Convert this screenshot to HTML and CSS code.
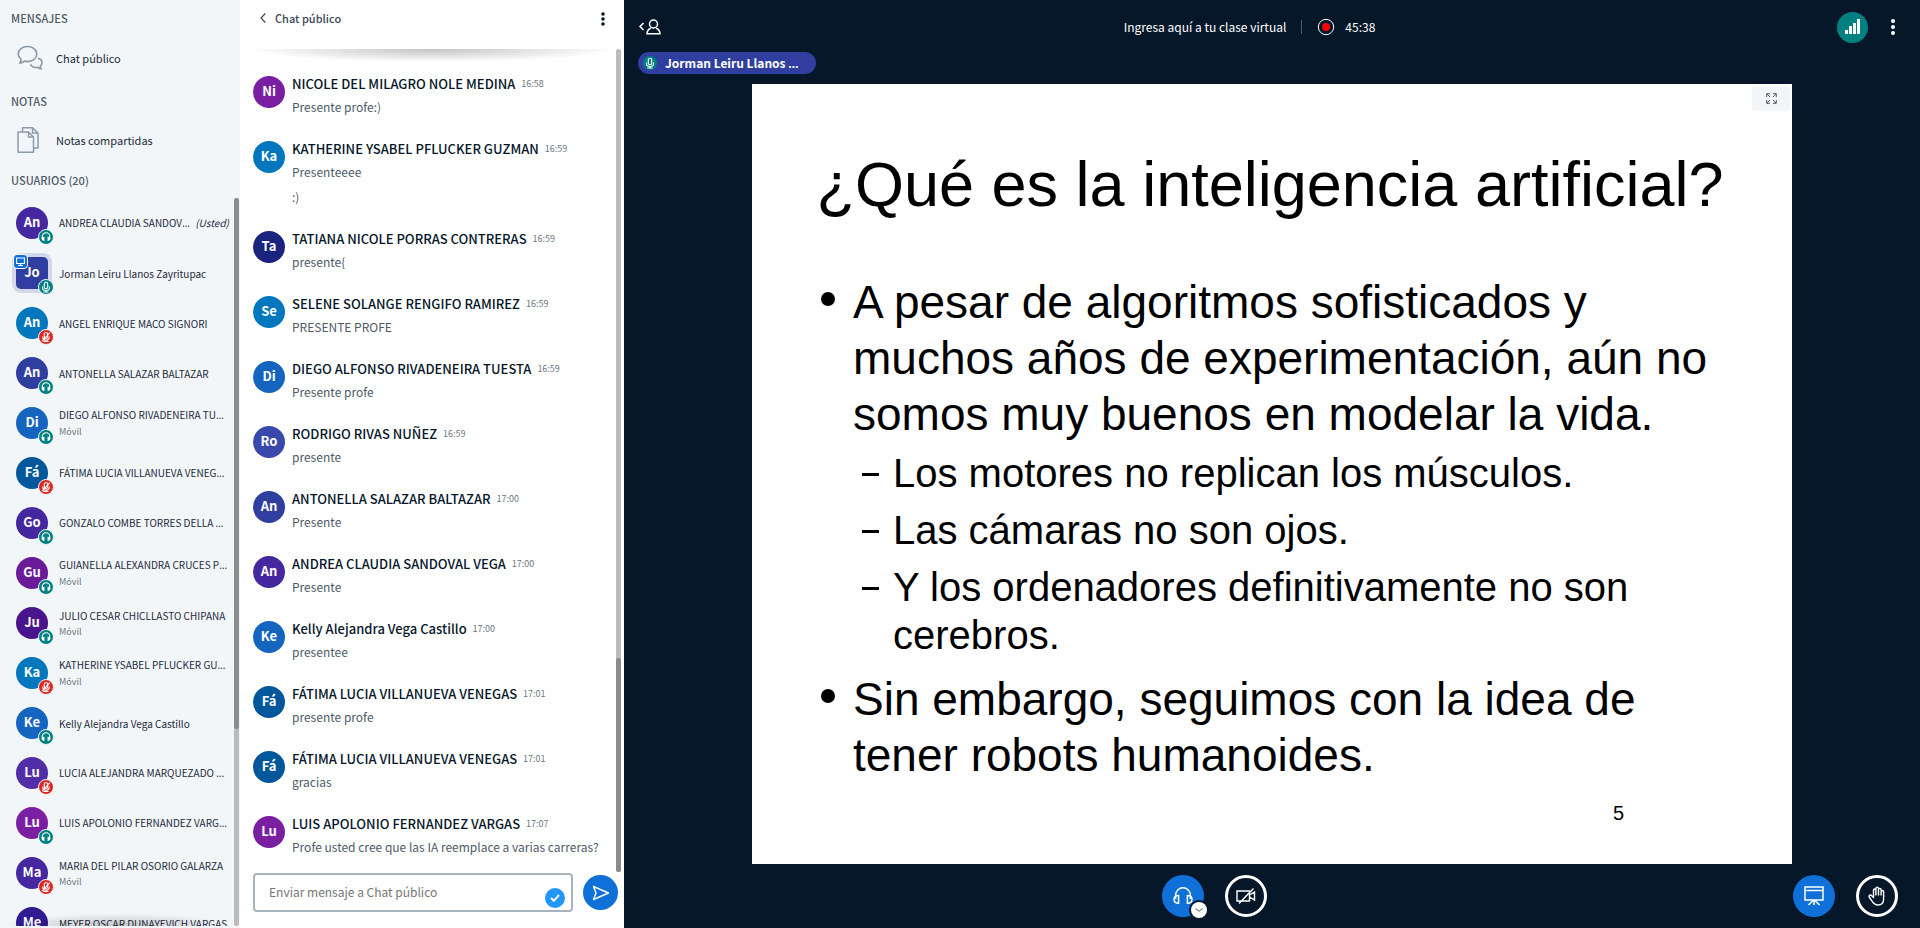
FILE: index.html
```html
<!DOCTYPE html>
<html lang="es">
<head>
<meta charset="utf-8">
<title>Ingresa aquí a tu clase virtual</title>
<link rel="stylesheet" href="styles.css">
</head>
<body>
<svg class="sprite" aria-hidden="true">
  <symbol id="i-headset" viewBox="0 0 20 20"><path d="M2.6 13V9.2a7.4 7.4 0 0 1 14.8 0V13" fill="none" stroke="currentColor" stroke-width="1.5"/><path d="M5.6 9.6v7.6C3 17.400 1 16 1 13.400s2-4 4.600-3.800zM14.400 9.600v7.600c2.600.200 4.600-1.200 4.600-3.800s-2-4-4.600-3.800z" fill="none" stroke="currentColor" stroke-width="1.500"/></symbol>
  <symbol id="i-mini-headset" viewBox="0 0 14 14"><path d="M2.600 9V6.500a4.400 4.400 0 0 1 8.800 0V9" fill="none" stroke="currentColor" stroke-width="1.300"/><path d="M5.200 6.600v5C3.200 11.600 2 10.700 2 9.100s1.200-2.500 3.200-2.500zM8.800 6.600v5c2 0 3.200-.900 3.200-2.500s-1.200-2.500-3.200-2.500z" fill="currentColor"/></symbol>
  <symbol id="i-mic" viewBox="0 0 14 14"><rect x="5" y="1.500" width="4" height="7.500" rx="2" fill="none" stroke="currentColor" stroke-width="1.300"/><path d="M3 6.500v1.700c0 3.900 8 3.900 8 0V6.500M7 11v2M4 12.800h6" fill="none" stroke="currentColor" stroke-width="1.200"/></symbol>
  <symbol id="i-mute" viewBox="0 0 14 14"><rect x="5" y="2" width="4" height="6.500" rx="1.500" fill="none" stroke="currentColor" stroke-width="1.300"/><path d="M3.300 6.500v1.500c0 3.600 7.400 3.600 7.400 0V6.500M7 10.500v2M4 12.300h6M11.500 1.800l-9 10" fill="none" stroke="currentColor" stroke-width="1.200"/></symbol>
</svg>
<div class="app">
  <aside class="sidebar">
    <h2 class="side-title">Mensajes</h2>
    <button class="side-item side-item-first" type="button">
      <svg class="side-icon" viewBox="0 0 26 26" aria-hidden="true"><g fill="none" stroke="currentColor" stroke-width="1.600" stroke-linejoin="round"><path d="M10.500 1.500c5.200 0 9.300 3.300 9.300 7.500s-4.100 7.600-9.300 7.600c-1.200 0-2.200-.200-3.200-.500-1 1-2.500 1.800-4.500 2 .8-1 1.300-2.500 1.200-3.900C2.200 12.800 1.200 11 1.200 9c0-4.200 4.100-7.500 9.300-7.500z"/><path d="M21 13.400c2.400.6 4 2.300 4 4.300 0 1.300-.6 2.500-1.700 3.300 0 1 .3 2 1 2.800-1.500-.1-2.700-.6-3.500-1.400-3.200.5-6.300-.8-7.300-3.100"/></g></svg>
      <span>Chat público</span>
    </button>
    <h2 class="side-title">Notas</h2>
    <button class="side-item" type="button">
      <svg class="side-icon" viewBox="0 0 26 26" aria-hidden="true"><g fill="none" stroke="currentColor" stroke-width="1.500" stroke-linejoin="round"><path d="M1 5h10.500l5 5v15.200H1zM11.500 5v5h5"/><path d="M5.500 5V.8h10L21 6v15h-4.500M15.500.8V6H21"/></g></svg>
      <span>Notas compartidas</span>
    </button>
    <h2 class="side-title side-title-users">Usuarios (20)</h2>
    <div class="user-area">
      <ul class="users">
        <li class="user"><span class="avatar c-violet">An<i class="badge"><svg><use href="#i-mini-headset"/></svg></i></span><span class="user-name">ANDREA CLAUDIA SANDOV<span class="dots">…</span> <em>(Usted)</em></span></li>
        <li class="user"><span class="avatar c-indigo presenter">Jo<i class="screen"><svg viewBox="0 0 14 14"><path d="M2 2.500h10v7H2zM7 9.500v2M4 12h6" fill="none" stroke="currentColor" stroke-width="1.400"/></svg></i><i class="badge"><svg><use href="#i-mic"/></svg></i></span><span class="user-name">Jorman Leiru Llanos Zayritupac</span></li>
        <li class="user"><span class="avatar c-sky">An<i class="badge muted"><svg><use href="#i-mute"/></svg></i></span><span class="user-name">ANGEL ENRIQUE MACO SIGNORI</span></li>
        <li class="user"><span class="avatar c-indigo">An<i class="badge"><svg><use href="#i-mini-headset"/></svg></i></span><span class="user-name">ANTONELLA SALAZAR BALTAZAR</span></li>
        <li class="user"><span class="avatar c-blue">Di<i class="badge"><svg><use href="#i-mini-headset"/></svg></i></span><span class="user-name">DIEGO ALFONSO RIVADENEIRA TU<span class="dots">…</span><small>Móvil</small></span></li>
        <li class="user"><span class="avatar c-navy">Fá<i class="badge muted"><svg><use href="#i-mute"/></svg></i></span><span class="user-name">FÁTIMA LUCIA VILLANUEVA VENEG<span class="dots">…</span></span></li>
        <li class="user"><span class="avatar c-violet">Go<i class="badge"><svg><use href="#i-mini-headset"/></svg></i></span><span class="user-name">GONZALO COMBE TORRES DELLA <span class="dots">…</span></span></li>
        <li class="user"><span class="avatar c-purple">Gu<i class="badge"><svg><use href="#i-mini-headset"/></svg></i></span><span class="user-name">GUIANELLA ALEXANDRA CRUCES P<span class="dots">…</span><small>Móvil</small></span></li>
        <li class="user"><span class="avatar c-plum">Ju<i class="badge"><svg><use href="#i-mini-headset"/></svg></i></span><span class="user-name">JULIO CESAR CHICLLASTO CHIPANA<small>Móvil</small></span></li>
        <li class="user"><span class="avatar c-sky">Ka<i class="badge muted"><svg><use href="#i-mute"/></svg></i></span><span class="user-name">KATHERINE YSABEL PFLUCKER GU<span class="dots">…</span><small>Móvil</small></span></li>
        <li class="user"><span class="avatar c-blue">Ke<i class="badge"><svg><use href="#i-mini-headset"/></svg></i></span><span class="user-name">Kelly Alejandra Vega Castillo</span></li>
        <li class="user"><span class="avatar c-iris">Lu<i class="badge muted"><svg><use href="#i-mute"/></svg></i></span><span class="user-name">LUCIA ALEJANDRA MARQUEZADO <span class="dots">…</span></span></li>
        <li class="user"><span class="avatar c-magenta">Lu<i class="badge"><svg><use href="#i-mini-headset"/></svg></i></span><span class="user-name">LUIS APOLONIO FERNANDEZ VARG<span class="dots">…</span></span></li>
        <li class="user"><span class="avatar c-violet">Ma<i class="badge muted"><svg><use href="#i-mute"/></svg></i></span><span class="user-name">MARIA DEL PILAR OSORIO GALARZA<small>Móvil</small></span></li>
        <li class="user"><span class="avatar c-deep">Me</span><span class="user-name">MEYER OSCAR DUNAYEVICH VARGAS</span></li>
      </ul>
      <div class="scroll"><div class="scroll-thumb users-thumb"></div></div>
    </div>
  </aside>

  <section class="chat">
    <header class="chat-head">
      <button class="chat-back" type="button"><svg width="6" height="10" viewBox="0 0 6 10" aria-hidden="true"><path d="M5.300.500 1 5l4.300 4.500" fill="none" stroke="currentColor" stroke-width="1.200"/></svg>Chat público</button>
      <button class="plain" type="button" aria-label="Opciones del chat"><svg width="4" height="14" viewBox="0 0 4 14"><g fill="currentColor"><circle cx="2" cy="2" r="1.800"/><circle cx="2" cy="7" r="1.800"/><circle cx="2" cy="12" r="1.800"/></g></svg></button>
    </header>
    <div class="chat-area">
      <ol class="messages">
        <li class="msg"><span class="avatar c-magenta">Ni</span><div><h3>NICOLE DEL MILAGRO NOLE MEDINA <time>16:58</time></h3><p>Presente profe:)</p></div></li>
        <li class="msg"><span class="avatar c-sky">Ka</span><div><h3>KATHERINE YSABEL PFLUCKER GUZMAN <time>16:59</time></h3><p>Presenteeee</p><p>:)</p></div></li>
        <li class="msg"><span class="avatar c-ink">Ta</span><div><h3>TATIANA NICOLE PORRAS CONTRERAS <time>16:59</time></h3><p>presente{</p></div></li>
        <li class="msg"><span class="avatar c-sky">Se</span><div><h3>SELENE SOLANGE RENGIFO RAMIREZ <time>16:59</time></h3><p>PRESENTE PROFE</p></div></li>
        <li class="msg"><span class="avatar c-blue">Di</span><div><h3>DIEGO ALFONSO RIVADENEIRA TUESTA <time>16:59</time></h3><p>Presente profe</p></div></li>
        <li class="msg"><span class="avatar c-slate">Ro</span><div><h3>RODRIGO RIVAS NUÑEZ <time>16:59</time></h3><p>presente</p></div></li>
        <li class="msg"><span class="avatar c-indigo">An</span><div><h3>ANTONELLA SALAZAR BALTAZAR <time>17:00</time></h3><p>Presente</p></div></li>
        <li class="msg"><span class="avatar c-violet">An</span><div><h3>ANDREA CLAUDIA SANDOVAL VEGA <time>17:00</time></h3><p>Presente</p></div></li>
        <li class="msg"><span class="avatar c-blue">Ke</span><div><h3>Kelly Alejandra Vega Castillo <time>17:00</time></h3><p>presentee</p></div></li>
        <li class="msg"><span class="avatar c-navy">Fá</span><div><h3>FÁTIMA LUCIA VILLANUEVA VENEGAS <time>17:01</time></h3><p>presente profe</p></div></li>
        <li class="msg"><span class="avatar c-navy">Fá</span><div><h3>FÁTIMA LUCIA VILLANUEVA VENEGAS <time>17:01</time></h3><p>gracias</p></div></li>
        <li class="msg"><span class="avatar c-magenta">Lu</span><div><h3>LUIS APOLONIO FERNANDEZ VARGAS <time>17:07</time></h3><p>Profe usted cree que las IA reemplace a varias carreras?</p></div></li>
      </ol>
      <div class="scroll"><div class="scroll-thumb chat-thumb"></div></div>
    </div>
    <form class="composer">
      <div class="field">
        <input type="text" aria-label="Enviar mensaje a Chat público" placeholder="Enviar mensaje a Chat público">
        <span class="check"><svg width="10" height="8" viewBox="0 0 10 8" aria-hidden="true"><path d="M1 4l2.800 2.800L9 1" fill="none" stroke="currentColor" stroke-width="2"/></svg></span>
      </div>
      <button class="send" type="button" aria-label="Enviar mensaje"><svg width="18" height="16" viewBox="0 0 18 16"><path d="M1.500 1.500 16.500 8l-15 6.500L4 8z" fill="none" stroke="currentColor" stroke-width="1.400" stroke-linejoin="round"/></svg></button>
    </form>
  </section>

  <main class="stage">
    <header class="bar">
      <button class="plain toggle" type="button" aria-label="Ocultar lista de usuarios"><svg width="24" height="18" viewBox="0 0 24 18"><g fill="none" stroke="currentColor" stroke-width="1.500"><path d="M5.500 5 2 8.500 5.500 12"/><circle cx="15.500" cy="6" r="4"/><path d="M9 16c0-3.200 2-5 3.800-5.700M22 16c0-3.200-2-5-3.800-5.700M8.300 15.800h14.400"/></g></svg></button>
      <div class="room">
        <h1>Ingresa aquí a tu clase virtual</h1>
        <span class="divider"></span>
        <span class="record"><svg width="18" height="18" viewBox="0 0 18 18" aria-hidden="true"><circle cx="9" cy="9" r="7.700" fill="none" stroke="#fff"/><circle cx="9" cy="9" r="4" fill="#f00"/></svg>45:38</span>
      </div>
      <button class="signal" type="button" aria-label="Estado de la conexión"><svg width="16" height="16" viewBox="0 0 16 16"><path d="M0 11h3v4H0zM4 7h3v8H4zM8 4h3v11H8zM12 0h3v15h-3z" fill="currentColor"/></svg></button>
      <button class="plain more" type="button" aria-label="Opciones"><svg width="4" height="16" viewBox="0 0 4 16"><g fill="currentColor"><circle cx="2" cy="2" r="2"/><circle cx="2" cy="8" r="2"/><circle cx="2" cy="14" r="2"/></g></svg></button>
    </header>
    <div class="talkers">
      <button class="talker" type="button"><i class="talker-mic"><svg><use href="#i-mic"/></svg></i><span>Jorman Leiru Llanos <span class="dots">…</span></span></button>
    </div>
    <div class="presentation">
      <article class="slide">
        <button class="expand" type="button" aria-label="Pantalla completa"><svg width="11" height="11" viewBox="0 0 11 11"><path d="M.700 4V.700H4M7 .700h3.300V4M10.300 7v3.300H7M4 10.300H.700V7M1 1l3 3M10 1 7 4M10 10 7 7M1 10l3-3" fill="none" stroke="currentColor" stroke-width="1"/></svg></button>
        <h2 class="slide-title">¿Qué es la inteligencia artificial?</h2>
        <ul class="points">
          <li>A pesar de algoritmos sofisticados y<br>muchos años de experimentación, aún no<br>somos muy buenos en modelar la vida.
            <ul class="subpoints">
              <li>Los motores no replican los músculos.</li>
              <li>Las cámaras no son ojos.</li>
              <li>Y los ordenadores definitivamente no son<br>cerebros.</li>
            </ul>
          </li>
          <li>Sin embargo, seguimos con la idea de<br>tener robots humanoides.</li>
        </ul>
        <p class="slide-number">5</p>
      </article>
    </div>
    <footer class="actions">
      <div class="actions-center">
        <div class="audio">
          <button class="round filled" type="button" aria-label="Audio"><svg width="20" height="20"><use href="#i-headset"/></svg></button>
          <button class="audio-menu" type="button" aria-label="Cambiar dispositivo"><svg width="8" height="4" viewBox="0 0 8 4"><path d="M.500.500 4 3.300 7.500.500" fill="none" stroke="currentColor"/></svg></button>
        </div>
        <button class="round" type="button" aria-label="Compartir cámara"><svg width="20" height="18" viewBox="0 0 20 18"><g fill="none" stroke="currentColor" stroke-width="1.400"><path d="M1 4h12.500v10H1zM13.500 8l5-3v8l-5-3M3 16.500 17.500 1.500"/></g></svg></button>
      </div>
      <button class="round filled" type="button" aria-label="Presentación"><svg width="20" height="20" viewBox="0 0 20 20"><g fill="none" stroke="currentColor" stroke-width="1.500"><path d="M1 1h18v13H1zM1 4.500h18M10 14v5M9 14.500 4.500 19M11 14.500l4.500 4.500"/></g></svg></button>
      <button class="round" type="button" aria-label="Levantar la mano"><svg width="18" height="20" viewBox="0 0 18 20"><path d="M5.500 11.500V4.200c0-1.700 2.400-1.700 2.400 0V2.500c0-1.900 2.600-1.900 2.600 0v1.200c0-1.800 2.600-1.800 2.600 0v2c0-1.700 2.500-1.700 2.500 0V13c0 4-2 6-5.600 6-3.500 0-4.700-1.600-6-3.800L1.200 11c-.8-1.700 1.400-2.600 2.500-1.200zM7.900 4.200V9.500M10.500 3.500v6M13.100 5v4.500" fill="none" stroke="currentColor" stroke-width="1.400" stroke-linejoin="round"/></svg></button>
    </footer>
  </main>
</div>
</body>
</html>
```
FILE: styles.css
```css
* { box-sizing: border-box; }

body {
  margin: 0;
  font-family: "Source Sans Pro", "Noto Sans CJK SC", "Noto Sans", sans-serif;
  font-size: 12px;
  color: #4e5a66;
  background: #06172a;
}

h1, h2, h3, p, ul, ol { margin: 0; padding: 0; }
ul, ol { list-style: none; }
i { font-style: normal; }
svg { display: block; }
.sprite { position: absolute; width: 0; height: 0; }

button {
  margin: 0;
  padding: 0;
  border: 0;
  font: inherit;
  color: inherit;
  background: none;
}

.dots { font-family: "Noto Sans", sans-serif; }

.app {
  display: grid;
  grid-template-columns: 240px 384px minmax(0, 1fr);
  height: 100vh;
}

/* Shared avatar */
.avatar {
  position: relative;
  flex: none;
  width: 32px;
  height: 32px;
  border-radius: 50%;
  font-size: 13px;
  font-weight: 700;
  line-height: 30px;
  text-align: center;
  color: #fff;
}
.c-violet { background: #4527a0; }
.c-indigo { background: #303f9f; }
.c-sky { background: #0277bd; }
.c-blue { background: #1565c0; }
.c-navy { background: #01579b; }
.c-purple { background: #6a1b9a; }
.c-plum { background: #4a148c; }
.c-iris { background: #512da8; }
.c-magenta { background: #7b1fa2; }
.c-deep { background: #311b92; }
.c-ink { background: #1a237e; }
.c-slate { background: #3949ab; }

/* Sidebar */
.sidebar {
  display: flex;
  flex-direction: column;
  min-height: 0;
  padding: 8px 0 2px;
  background: #f3f6f9;
}
.side-title {
  margin-top: 9px;
  padding-left: 11px;
  font-size: 11px;
  font-weight: 500;
  line-height: 20px;
  text-transform: uppercase;
}
.side-title:first-child { margin-top: 0; }
.side-title-users { margin: 6px 0 8px; }
.side-item {
  display: flex;
  align-items: center;
  gap: 13px;
  height: 48px;
  margin-top: 5px;
  padding-left: 17px;
  font-size: 11px;
  line-height: 20px;
  color: #1b2a3a;
}
.side-item-first { margin-top: 6px; }
.side-icon { width: 26px; height: 26px; color: #8b9aa8; }

.user-area {
  position: relative;
  flex: 1;
  min-height: 0;
  overflow: hidden;
}
.user-area::after {
  content: "";
  position: absolute;
  left: 0;
  right: 6px;
  bottom: 0;
  height: 13px;
  background: radial-gradient(farthest-side at 50% 100%, rgba(0, 0, 0, .2), rgba(0, 0, 0, 0));
}
.user {
  display: flex;
  align-items: center;
  gap: 11px;
  height: 50px;
  padding-left: 16px;
}
.user-name {
  font-size: 10px;
  line-height: 17px;
  white-space: nowrap;
  color: #1b2a3a;
}
.user-name em { margin-left: 3px; }
.user-name small {
  display: block;
  font-size: 9px;
  line-height: 16px;
  color: #6b7682;
}
.presenter { border-radius: 5px; box-shadow: 0 0 0 4px #d2d7ea; }
.badge {
  position: absolute;
  right: -6px;
  bottom: -6px;
  width: 16px;
  height: 16px;
  padding: 1px;
  border: 1px solid #f3f6f9;
  border-radius: 50%;
  color: #fff;
  background: #008081;
}
.badge svg { width: 12px; height: 12px; }
.muted { background: #df2721; }
.screen {
  position: absolute;
  left: -3px;
  top: -3px;
  padding: 1px;
  border: 1px solid #fff;
  border-radius: 4px;
  color: #fff;
  background: #0f70d7;
}
.screen svg { width: 11px; height: 11px; }

.scroll {
  position: absolute;
  top: 0;
  right: 1px;
  bottom: 0;
  width: 5px;
  border-radius: 3px;
  background: #b9bbbd;
}
.scroll-thumb {
  position: absolute;
  left: 0;
  right: 0;
  border-radius: 3px;
  background: #8a8c8e;
}
.users-thumb { top: 0; height: 73%; }
.chat-thumb { bottom: 0; height: 26%; }

/* Chat */
.chat {
  display: flex;
  flex-direction: column;
  min-height: 0;
  background: #fff;
}
.chat-head {
  display: flex;
  justify-content: space-between;
  align-items: flex-start;
  height: 49px;
  padding: 8px 18px 0 20px;
}
.chat-back {
  display: flex;
  align-items: center;
  gap: 9px;
  font-size: 11px;
  font-weight: 500;
  line-height: 20px;
  color: #3a4754;
}
.chat-head .plain { padding: 4px 1px; color: #06172a; }
.chat-area {
  position: relative;
  flex: 1;
  min-height: 0;
  overflow: hidden;
}
.chat-area::before {
  content: "";
  position: absolute;
  left: 8px;
  right: 8px;
  top: 0;
  height: 13px;
  background: radial-gradient(farthest-side at 50% 0, rgba(0, 0, 0, .24), rgba(0, 0, 0, 0));
}
.chat-area .scroll { right: 3px; }
.messages {
  display: flex;
  flex-direction: column;
  gap: 20px;
  padding: 25px 8px 0 13px;
}
.msg { display: flex; gap: 7px; }
.msg .avatar { margin-top: 2px; }
.msg h3 {
  font-size: 13px;
  font-weight: 500;
  line-height: 20px;
  white-space: nowrap;
  color: #06172a;
}
.msg time {
  margin-left: 3px;
  font-size: 9px;
  font-weight: 400;
  vertical-align: 2px;
  line-height: 12px;
  color: #6b7682;
}
.msg p { font-size: 12px; line-height: 25px; white-space: nowrap; }

.composer {
  display: flex;
  align-items: center;
  gap: 10px;
  padding: 1px 6px 16px 13px;
}
.field { position: relative; flex: 1; }
.field input {
  display: block;
  width: 100%;
  height: 39px;
  padding: 0 40px 2px 14px;
  border: 2px solid #a7b3bd;
  border-radius: 4px;
  font: inherit;
  color: #4e5a66;
  background: #fff;
}
.field input::placeholder { color: #757575; opacity: 1; }
.check {
  position: absolute;
  right: 8px;
  bottom: 4px;
  display: grid;
  place-items: center;
  width: 20px;
  height: 20px;
  border-radius: 50%;
  color: #fff;
  background: #2196ff;
}
.send {
  display: grid;
  place-items: center;
  width: 35px;
  height: 35px;
  border-radius: 50%;
  color: #fff;
  background: #0f70d7;
}

/* Stage */
.stage {
  display: flex;
  flex-direction: column;
  min-width: 0;
  min-height: 0;
  color: #fff;
}
.bar {
  display: flex;
  align-items: center;
  height: 52px;
  padding: 2px 17px 0 14px;
}
.room {
  flex: 1;
  display: flex;
  justify-content: center;
  align-items: center;
  gap: 15px;
  line-height: 20px;
}
.room h1 { font-size: 12px; font-weight: 400; }
.divider { width: 1px; height: 14px; background: #4e5a66; }
.record { display: flex; align-items: center; gap: 10px; }
.signal {
  display: grid;
  place-items: center;
  width: 31px;
  height: 31px;
  border-radius: 50%;
  background: #008081;
}
.more { padding: 8px; margin-left: 15px; }

.talkers { display: flex; height: 32px; padding-left: 14px; }
.talker {
  display: flex;
  align-items: center;
  gap: 8px;
  height: 22px;
  padding: 0 17px 0 5px;
  border-radius: 11px;
  font-size: 12px;
  font-weight: 700;
  line-height: 20px;
  background: #303f9f;
}
.talker-mic {
  padding: 1px;
  border-radius: 50%;
  background: #008081;
}
.talker-mic svg { width: 12px; height: 12px; }

.presentation {
  flex: 1;
  display: flex;
  justify-content: center;
  min-height: 0;
}
.slide {
  position: relative;
  aspect-ratio: 4 / 3;
  height: 100%;
  overflow: hidden;
  padding: 60px 60px 0;
  font-family: "Liberation Sans", Arial, sans-serif;
  color: #000;
  background: #fff;
}
.expand {
  position: absolute;
  top: 2px;
  right: 2px;
  display: grid;
  place-items: center;
  width: 38px;
  height: 25px;
  border-radius: 3px;
  color: #4e5a66;
  background: #f3f6f9;
}
.slide-title {
  padding-right: 4px;
  font-size: 63px;
  font-weight: 400;
  line-height: 80px;
  white-space: nowrap;
  text-align: center;
}
.points {
  margin-top: 50px;
  padding-left: 41px;
  font-size: 46px;
  line-height: 56px;
  white-space: nowrap;
}
.points > li { position: relative; }
.points > li::before {
  content: "";
  position: absolute;
  left: -32px;
  top: 18px;
  width: 14px;
  height: 14px;
  border-radius: 50%;
  background: #000;
}
.subpoints {
  display: grid;
  gap: 9px;
  margin: 7px 0 12px;
  padding-left: 40px;
  font-size: 40px;
  line-height: 48px;
}
.subpoints li { position: relative; }
.subpoints li::before {
  content: "";
  position: absolute;
  left: -31px;
  top: 24px;
  width: 17px;
  height: 3px;
  background: #000;
}
.slide-number {
  margin: 18px 108px 0 0;
  font-size: 20px;
  line-height: 24px;
  text-align: right;
}

.actions {
  display: flex;
  align-items: center;
  gap: 21px;
  height: 64px;
  padding: 0 22px 0 33px;
}
.actions-center {
  flex: 1;
  display: flex;
  justify-content: center;
  gap: 21px;
}
.round {
  display: grid;
  place-items: center;
  width: 42px;
  height: 42px;
  border: 3px solid #fff;
  border-radius: 50%;
}
.filled { border: 0; background: #0f70d7; }
.audio { position: relative; }
.audio-menu {
  position: absolute;
  right: -3px;
  bottom: -1px;
  display: grid;
  place-items: center;
  width: 16px;
  height: 16px;
  border-radius: 50%;
  box-shadow: 0 0 0 2px #06172a;
  color: #4e5a66;
  background: #fff;
}
```
